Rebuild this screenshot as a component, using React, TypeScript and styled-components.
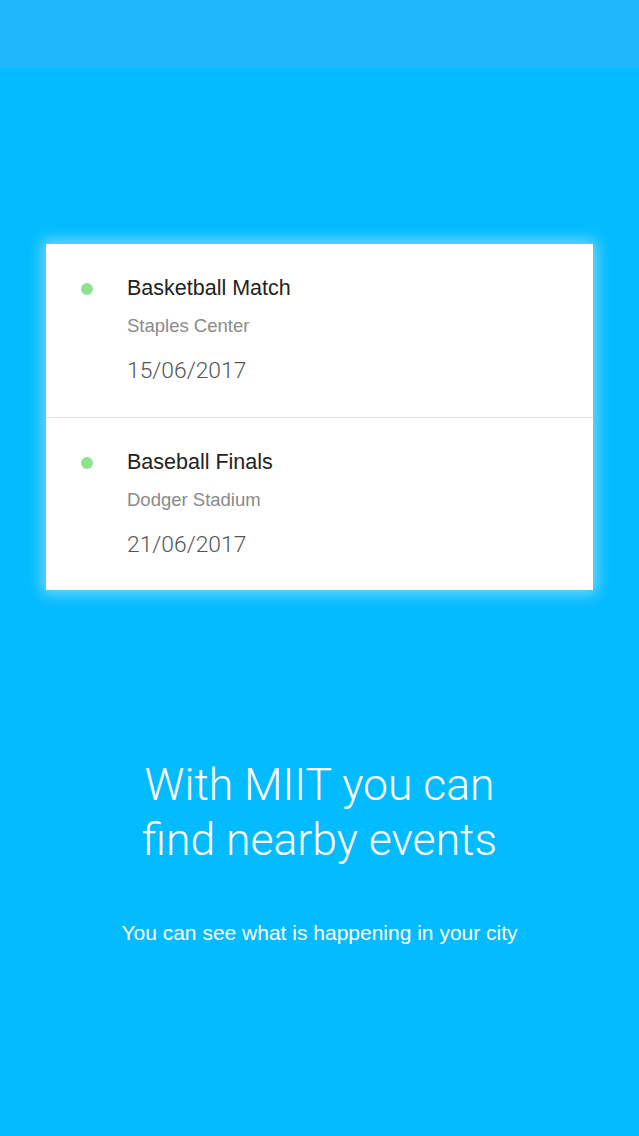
import React from 'react';
import styled, { createGlobalStyle } from 'styled-components';

const GlobalStyle = createGlobalStyle`
  html, body {
    margin: 0;
    padding: 0;
    background: #03bbff;
  }
  body {
    font-family: 'Liberation Sans', Arial, sans-serif;
  }
`;

const Screen = styled.div`
  width: 639px;
  height: 1136px;
  display: flex;
  flex-direction: column;
  background: #03bbff;
  overflow: hidden;
`;

const StatusBar = styled.div`
  height: 68px;
  flex-shrink: 0;
  background: #21b7fc;
`;

const Content = styled.main`
  display: flex;
  flex-direction: column;
  align-items: center;
  padding-top: 176px;
`;

const Card = styled.section`
  width: 547px;
  background: #fff;
  box-shadow: 0 0 14px 4px rgba(255, 255, 255, 0.45);
`;

const EventRow = styled.div`
  display: grid;
  grid-template-columns: 81px 1fr;
  height: 173px;
  box-sizing: border-box;
  padding-top: 31px;

  & + & {
    border-top: 1px solid #e2e2e2;
  }
`;

const Dot = styled.span`
  width: 12px;
  height: 12px;
  border-radius: 50%;
  background: #8ee48e;
  justify-self: start;
  margin-left: 35px;
  margin-top: 8px;
`;

const Info = styled.div`
  display: flex;
  flex-direction: column;
`;

const Title = styled.div`
  font-size: 21.5px;
  line-height: 26px;
  color: #222;
`;

const Place = styled.div`
  margin-top: 14px;
  font-size: 18.5px;
  line-height: 22px;
  color: #8a8a8a;
`;

const DateText = styled.div`
  margin-top: 20px;
  font-family: 'Roboto', 'Liberation Sans', sans-serif;
  font-weight: 300;
  font-size: 22.8px;
  line-height: 28px;
  color: #555;
`;

const Headline = styled.h1`
  margin: 168px 0 0;
  font-family: 'Roboto', 'Liberation Sans', sans-serif;
  font-weight: 300;
  font-size: 44.5px;
  line-height: 55px;
  color: #fff;
  text-align: center;
`;

const Subline = styled.p`
  margin: 53px 0 0;
  font-family: 'Liberation Sans', Arial, sans-serif;
  font-size: 21px;
  line-height: 24px;
  color: #fff;
  text-align: center;
`;

const events = [
  { title: 'Basketball Match', place: 'Staples Center', date: '15/06/2017' },
  { title: 'Baseball Finals', place: 'Dodger Stadium', date: '21/06/2017' },
];

export default function App() {
  return (
    <Screen>
      <GlobalStyle />
      <StatusBar />
      <Content>
        <Card>
          {events.map((e) => (
            <EventRow key={e.title}>
              <Dot />
              <Info>
                <Title>{e.title}</Title>
                <Place>{e.place}</Place>
                <DateText>{e.date}</DateText>
              </Info>
            </EventRow>
          ))}
        </Card>
        <Headline>
          With MIIT you can
          <br />
          find nearby events
        </Headline>
        <Subline>You can see what is happening in your city</Subline>
      </Content>
    </Screen>
  );
}
